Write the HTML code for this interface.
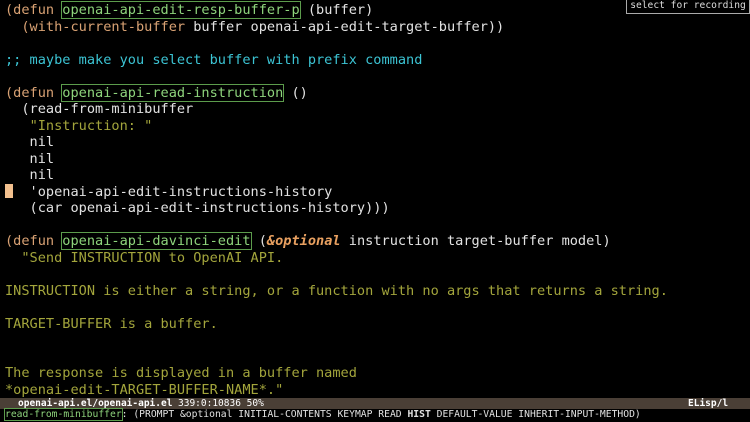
<!DOCTYPE html>
<html><head><meta charset="utf-8"><style>
body{margin:0;width:750px;height:422px;background:#000;overflow:hidden;position:relative;font-family:"DejaVu Sans Mono","Liberation Mono",monospace;}
.l{position:absolute;left:5px;font-size:13.6px;line-height:16.5px;white-space:pre;color:#e2e2e2;}
.k{color:#d9a274}
.f{color:#8ed47c;outline:1px solid #5c9c4c;outline-offset:0}
.c{color:#3cc4d4}
.d{color:#a3a53c}
.o{color:#e8a060;font-weight:bold;font-style:italic}
#rec{position:absolute;left:626px;top:0;width:122px;height:13px;border:1px solid #aaa;border-top:none;color:#ddd;font-size:9.6px;line-height:12px;text-align:center;background:#000;white-space:nowrap;overflow:hidden}
#mode{position:absolute;left:0;top:398px;width:750px;height:11px;background:#4a3f36;color:#fff;font-size:9.5px;line-height:11px;white-space:pre;font-weight:bold}
#mode span{position:absolute;top:0}
#mini{position:absolute;left:5px;top:409px;font-size:9.7px;line-height:12px;white-space:pre;color:#e2e2e2}
#cur{position:absolute;left:5px;top:184px;width:8px;height:14px;background:#f2c08e}
</style></head><body>
<div id="rec">select for recording</div>
<div class="l" style="top:2px"><span class="k">(defun</span> <span class="f">openai-api-edit-resp-buffer-p</span> (buffer)</div>
<div class="l" style="top:18.5px">  <span class="k">(with-current-buffer</span> buffer openai-api-edit-target-buffer))</div>
<div class="l c" style="top:51.5px">;; maybe make you select buffer with prefix command</div>
<div class="l" style="top:84.5px"><span class="k">(defun</span> <span class="f">openai-api-read-instruction</span> ()</div>
<div class="l" style="top:101px">  (read-from-minibuffer</div>
<div class="l" style="top:117.5px">   <span class="d">"Instruction: "</span></div>
<div class="l" style="top:134px">   nil</div>
<div class="l" style="top:150.5px">   nil</div>
<div class="l" style="top:167px">   nil</div>
<div id="cur"></div>
<div class="l" style="top:183.5px">   'openai-api-edit-instructions-history</div>
<div class="l" style="top:200px">   (car openai-api-edit-instructions-history)))</div>
<div class="l" style="top:233px"><span class="k">(defun</span> <span class="f">openai-api-davinci-edit</span> (<span class="o">&amp;optional</span> instruction target-buffer model)</div>
<div class="l d" style="top:249.5px">  "Send INSTRUCTION to OpenAI API.</div>
<div class="l d" style="top:282.5px">INSTRUCTION is either a string, or a function with no args that returns a string.</div>
<div class="l d" style="top:315.5px">TARGET-BUFFER is a buffer.</div>
<div class="l d" style="top:365px">The response is displayed in a buffer named</div>
<div class="l d" style="top:381.5px">*openai-edit-TARGET-BUFFER-NAME*."</div>
<div id="mode"><span style="left:18px">openai-api.el/openai-api.el</span><span style="left:178px;font-weight:normal">339:0:10836 50%</span><span style="left:688px">ELisp/l</span></div>
<div id="mini"><span class="f" style="color:#8ed47c">read-from-minibuffer</span>: (PROMPT &amp;optional INITIAL-CONTENTS KEYMAP READ <b>HIST</b> DEFAULT-VALUE INHERIT-INPUT-METHOD)</div>
</body></html>
